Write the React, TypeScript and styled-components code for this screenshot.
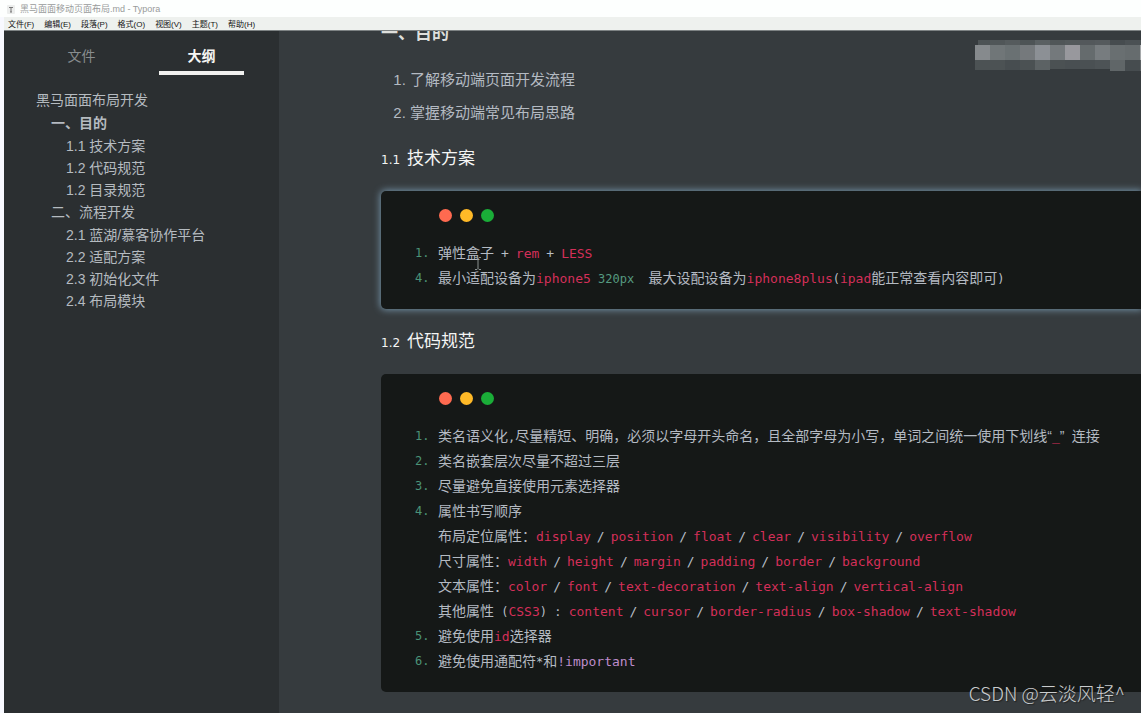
import React from 'react';
import styled, { createGlobalStyle } from 'styled-components';

const SANS = '"Liberation Sans", "Noto Sans CJK SC", sans-serif';
const MONO = '"DejaVu Sans Mono", "Noto Sans CJK SC", monospace';

const GlobalStyle = createGlobalStyle`
  * { box-sizing: border-box; }
  body { margin: 0; background: #f8f9ff; font-family: ${SANS}; }
  ul, ol { margin: 0; padding: 0; }
`;

const Window = styled.div`
  position: relative;
  display: flex;
  flex-direction: column;
  height: 100vh;
  overflow: hidden;
`;

const TitleBar = styled.header`
  display: flex;
  align-items: center;
  gap: 5px;
  flex: none;
  height: 17px;
  padding: 2px 0 0 7px;
  background: #fdfffe;
  color: #999b9b;
  font-size: 9px;
  line-height: 15px;
`;

const MenuBar = styled.nav`
  display: flex;
  align-items: center;
  gap: 10px;
  flex: none;
  height: 14px;
  margin-left: 4px;
  padding: 2px 0 0 4px;
  background: #eef1ee;
  border-bottom: 1px solid #7d8283;
`;

const MenuButton = styled.button`
  padding: 0;
  border: 0;
  background: none;
  color: #141414;
  font-family: ${SANS};
  font-size: 8px;
  line-height: 11px;
`;

const Workspace = styled.div`
  display: flex;
  flex: 1;
  min-height: 0;
  margin-left: 4px;
`;

const Sidebar = styled.aside`
  flex: none;
  width: 275px;
  background: #2b2f31;
`;

const Tabs = styled.div`
  display: flex;
  gap: 35px;
  padding-left: 35px;
`;

const Tab = styled.button<{ $active?: boolean }>`
  width: 85px;
  height: 44px;
  padding: 8px 0 0;
  border: 0;
  border-bottom: 4px solid ${(p) => (p.$active ? '#f1f1ef' : 'transparent')};
  background: none;
  color: ${(p) => (p.$active ? '#f6f6f4' : '#888d8f')};
  font-family: ${SANS};
  font-size: 14px;
  font-weight: ${(p) => (p.$active ? 700 : 400)};
`;

const Outline = styled.ul`
  padding: 14px 0 0 32px;
  list-style: none;
`;

const OutlineGroup = styled.ul`
  padding: 1px 0 0 15px;
  list-style: none;
`;

const OutlineLink = styled.a<{ $current?: boolean }>`
  display: block;
  color: #b5bbc0;
  font-size: 14px;
  font-weight: ${(p) => (p.$current ? 700 : 400)};
  line-height: 22px;
  text-decoration: none;
`;

const Document = styled.main`
  flex: 1;
  min-width: 0;
  padding-left: 102px;
  overflow: hidden;
  background: #363b3e;
  color: #b4bac2;
`;

const SectionTitle = styled.h2`
  margin: -10px 0 16px;
  color: #dedfdc;
  font-size: 17px;
  line-height: 26px;
`;

const Goals = styled.ol`
  margin-bottom: 17px;
  padding-left: 29px;
  font-size: 15px;
  line-height: 33px;
`;

const TopicTitle = styled.h3`
  display: flex;
  align-items: baseline;
  gap: 7px;
  height: 26px;
  margin: 0 0 19px;
  color: #f4f5f4;
  font-size: 17px;
  font-weight: 400;
  line-height: 26px;
`;

const TopicNumber = styled.span`
  font-family: "DejaVu Sans", sans-serif;
  font-size: 12px;
  line-height: 12px;
`;

const CodeBlock = styled.section<{ $focused?: boolean }>`
  position: relative;
  margin-bottom: 20px;
  padding: 18px 0 18px 34px;
  border-radius: 5px 0 0 5px;
  background: #151817;
  box-shadow: ${(p) => (p.$focused ? '0 0 7px 1px #7391a5' : 'none')};
`;

const Lights = styled.div`
  display: flex;
  gap: 8px;
  margin-bottom: 19px;
  padding-left: 24px;
`;

const Light = styled.span<{ $color: string }>`
  width: 13px;
  height: 13px;
  border-radius: 50%;
  background: ${(p) => p.$color};
`;

const CodeList = styled.ol`
  list-style: none;
`;

const CodeItem = styled.li`
  display: flex;
  font-size: 14px;
  line-height: 25px;
  white-space: pre;
`;

const ItemNumber = styled.span`
  flex: none;
  width: 23px;
  color: #4b9377;
  font-family: ${MONO};
  font-size: 12px;
`;

const CodeLine = styled.div`
  height: 25px;
`;

const tones = { plain: '#b8bfc6', key: '#d42f59', num: '#559a80', imp: '#bd8ccb' };

const Code = styled.code<{ $tone?: keyof typeof tones }>`
  color: ${(p) => tones[p.$tone ?? 'plain']};
  font-family: ${MONO};
  font-size: ${(p) => (p.$tone === 'key' || p.$tone === 'imp' ? 13 : 12)}px;
  line-height: 20px;
`;

const Operator = styled.code<{ $space: number }>`
  margin: 0 ${(p) => p.$space}px;
  color: ${tones.plain};
  font-family: ${MONO};
  font-size: 13px;
  line-height: 20px;
`;

const IBeam = styled.svg`
  position: absolute;
  left: 93px;
  top: 66px;
`;

const Mosaic = styled.svg`
  position: absolute;
  top: 40px;
  right: 0;
`;

const Watermark = styled.div`
  position: absolute;
  right: 16px;
  bottom: 7px;
  color: #c9cccd;
  font-family: "Noto Sans CJK SC", sans-serif;
  font-size: 19px;
  font-weight: 300;
  line-height: 26px;
  text-shadow: 1px 1px 1px #222;
`;

const menus = ['文件(F)', '编辑(E)', '段落(P)', '格式(O)', '视图(V)', '主题(T)', '帮助(H)'];

const outline = [
  { title: '一、目的', current: true, topics: ['1.1 技术方案', '1.2 代码规范', '1.2 目录规范'] },
  {
    title: '二、流程开发',
    topics: ['2.1 蓝湖/慕客协作平台', '2.2 适配方案', '2.3 初始化文件', '2.4 布局模块'],
  },
];

const mosaicTop = ['#4d5355', '#505658', '#555b5d', '#4e5456', '#5a6062', '#505658', '#53595b', '#53585b', '#555a5d', '#464c4f', '#4b5154', '#4b5154'];
const mosaicMid = ['#868a8d', '#707678', '#6a7173', '#75797c', '#8c9095', '#74797c', '#98989d', '#656b6d', '#777c7f', '#696f71', '#666c6e', '#a5a8aa'];
const mosaicLow = ['#4c5254', '#4c5254', '#474d50', '#4b5153', '#5c6264', '#4b5153', '#494f52', '#4a5053', '#4d5356', '#606668', '#464c4f', '#5a6062'];

function WindowLights() {
  return (
    <Lights>
      <Light $color="#ff6a50" />
      <Light $color="#ffb927" />
      <Light $color="#1aad38" />
    </Lights>
  );
}

function Item({ n, children }: { n: number; children: React.ReactNode }) {
  return (
    <CodeItem>
      <ItemNumber>{n}.</ItemNumber>
      <div>{children}</div>
    </CodeItem>
  );
}

function Props({ names }: { names: string[] }) {
  return (
    <>
      {names.map((name, i) => (
        <React.Fragment key={name}>
          {i > 0 && <Operator $space={6}>/</Operator>}
          <Code $tone="key">{name}</Code>
        </React.Fragment>
      ))}
    </>
  );
}

export default function App() {
  return (
    <Window>
      <GlobalStyle />
      <TitleBar>
        <svg width="8" height="9" viewBox="0 0 8 9" aria-hidden="true">
          <rect width="8" height="9" rx="1" fill="#eceeed" />
          <path d="M2 2.5h4M4 2.5v4.5M3 7h2" stroke="#777" fill="none" />
        </svg>
        <span>黑马面面移动页面布局.md - Typora</span>
      </TitleBar>
      <MenuBar>
        {menus.map((m) => (
          <MenuButton key={m}>{m}</MenuButton>
        ))}
      </MenuBar>
      <Workspace>
        <Sidebar>
          <Tabs>
            <Tab>文件</Tab>
            <Tab $active>大纲</Tab>
          </Tabs>
          <Outline>
            <li>
              <OutlineLink href="#top">黑马面面布局开发</OutlineLink>
              <OutlineGroup>
                {outline.map((s) => (
                  <li key={s.title}>
                    <OutlineLink href="#section" $current={s.current}>{s.title}</OutlineLink>
                    <OutlineGroup>
                      {s.topics.map((t) => (
                        <li key={t}>
                          <OutlineLink href="#topic">{t}</OutlineLink>
                        </li>
                      ))}
                    </OutlineGroup>
                  </li>
                ))}
              </OutlineGroup>
            </li>
          </Outline>
        </Sidebar>
        <Document>
          <SectionTitle>一、目的</SectionTitle>
          <Goals>
            <li>了解移动端页面开发流程</li>
            <li>掌握移动端常见布局思路</li>
          </Goals>
          <TopicTitle><TopicNumber>1.1</TopicNumber>技术方案</TopicTitle>
          <CodeBlock $focused>
            <WindowLights />
            <CodeList>
              <Item n={1}>
                <CodeLine>弹性盒子<Operator $space={7}>+</Operator><Code $tone="key">rem</Code><Operator $space={7}>+</Operator><Code $tone="key">LESS</Code></CodeLine>
              </Item>
              <Item n={4}>
                <CodeLine>最小适配设备为<Code $tone="key">iphone5</Code><Code> </Code><Code $tone="num">320px</Code><Code>{'  '}</Code>最大设配设备为<Code $tone="key">iphone8plus</Code><Code>(</Code><Code $tone="key">ipad</Code>能正常查看内容即可<Code>)</Code></CodeLine>
              </Item>
            </CodeList>
            <IBeam width="8" height="13" viewBox="0 0 8 13" aria-hidden="true">
              <path d="M1 .5h2l1 1 1-1h2M4 1.5v10M1 12.5h2l1-1 1 1h2" stroke="#8b9190" fill="none" />
            </IBeam>
          </CodeBlock>
          <TopicTitle><TopicNumber>1.2</TopicNumber>代码规范</TopicTitle>
          <CodeBlock>
            <WindowLights />
            <CodeList>
              <Item n={1}>
                <CodeLine>类名语义化<Code>,</Code>尽量精短、明确，必须以字母开头命名，且全部字母为小写，单词之间统一使用下划线“<Code $tone="key">_</Code>”<Code> </Code>连接</CodeLine>
              </Item>
              <Item n={2}><CodeLine>类名嵌套层次尽量不超过三层</CodeLine></Item>
              <Item n={3}><CodeLine>尽量避免直接使用元素选择器</CodeLine></Item>
              <Item n={4}>
                <CodeLine>属性书写顺序</CodeLine>
                <CodeLine>布局定位属性：<Props names={['display', 'position', 'float', 'clear', 'visibility', 'overflow']} /></CodeLine>
                <CodeLine>尺寸属性：<Props names={['width', 'height', 'margin', 'padding', 'border', 'background']} /></CodeLine>
                <CodeLine>文本属性：<Props names={['color', 'font', 'text-decoration', 'text-align', 'vertical-align']} /></CodeLine>
                <CodeLine>其他属性<Code> (</Code><Code $tone="key">CSS3</Code><Code>) : </Code><Props names={['content', 'cursor', 'border-radius', 'box-shadow', 'text-shadow']} /></CodeLine>
              </Item>
              <Item n={5}><CodeLine>避免使用<Code $tone="key">id</Code>选择器</CodeLine></Item>
              <Item n={6}><CodeLine>避免使用通配符<Code>*</Code>和<Code $tone="imp">!important</Code></CodeLine></Item>
            </CodeList>
          </CodeBlock>
        </Document>
      </Workspace>
      <Mosaic width="166" height="31" viewBox="0 0 166 31" aria-hidden="true">
        {mosaicMid.map((c, i) => (
          <g key={i}>
            <rect x={i === 0 ? 3 : i * 15} y="0" width="15" height="5" fill={mosaicTop[i]} />
            <rect x={i * 15} y="5" width="15" height="15" fill={c} />
            <rect x={i * 15} y="20" width="15" height={i < 5 ? 10 : i < 9 ? 9 : 11} fill={mosaicLow[i]} />
          </g>
        ))}
      </Mosaic>
      <Watermark>CSDN @云淡风轻^</Watermark>
    </Window>
  );
}
